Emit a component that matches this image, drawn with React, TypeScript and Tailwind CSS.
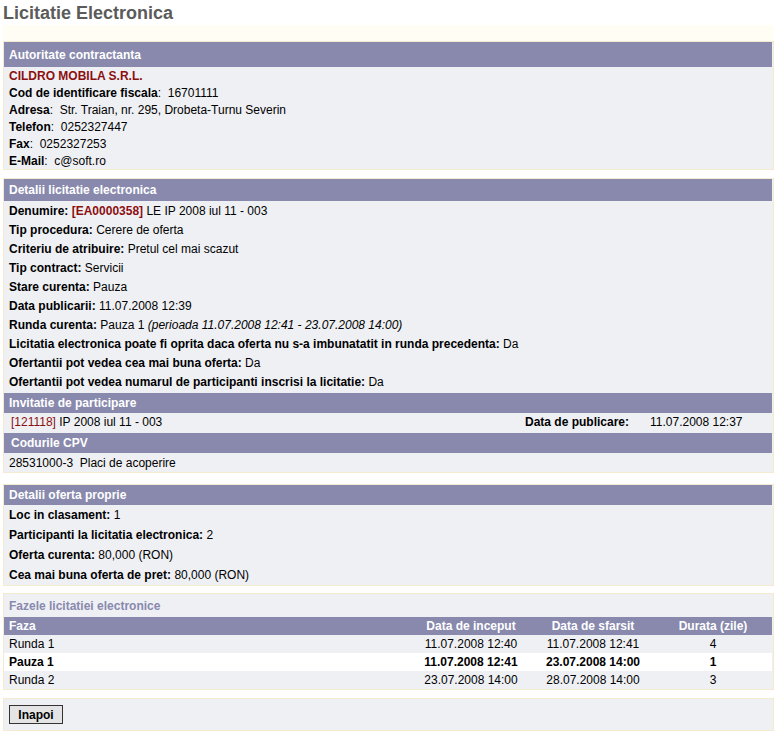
const F = "font-['Liberation_Sans',Arial,sans-serif]";

function Box({ children, className = "" }: { children: React.ReactNode; className?: string }) {
  return (
    <div className={`ml-[3px] w-[771px] border border-[#f3ead0] bg-[#eff0f4] ${className}`}>{children}</div>
  );
}

function Header({ children, h = "h-[20px]", pl = "pl-[5px]", className = "" }: { children: React.ReactNode; h?: string; pl?: string; className?: string }) {
  return (
    <div className={`mr-[1px] flex items-center bg-[#8889ad] font-bold text-white ${h} ${pl} ${className}`}>
      {children}
    </div>
  );
}

function Row({ label, children, h = "h-[19px]" }: { label: string; children?: React.ReactNode; h?: string }) {
  return (
    <div className={`flex items-center whitespace-pre pl-[5px] ${h}`}>
      <b>{label}</b>
      {children}
    </div>
  );
}

const phases = [
  { faza: "Runda 1", start: "11.07.2008 12:40", end: "11.07.2008 12:41", dur: "4", bold: false },
  { faza: "Pauza 1", start: "11.07.2008 12:41", end: "23.07.2008 14:00", dur: "1", bold: true },
  { faza: "Runda 2", start: "23.07.2008 14:00", end: "28.07.2008 14:00", dur: "3", bold: false },
];

export default function App() {
  return (
    <div className={`min-h-[734px] w-[779px] bg-white text-[12px] leading-none text-black ${F}`}>
      <h1 className="flex h-[25px] items-center pl-[3px] text-[18px] font-bold text-[#5b5b5b]">
        Licitatie Electronica
      </h1>

      <div className="ml-[3px] h-[16px] w-[771px] bg-[#fffdf4]" />

      {/* Autoritate contractanta */}
      <Box>
        <Header h="h-[25px]">Autoritate contractanta</Header>
        <div className="flex h-[17px] items-center pl-[5px] font-bold text-[#8b0f0f]">CILDRO MOBILA S.R.L.</div>
        <Row label="Cod de identificare fiscala" h="h-[17px]">:  16701111</Row>
        <Row label="Adresa" h="h-[17px]">:  Str. Traian, nr. 295, Drobeta-Turnu Severin</Row>
        <Row label="Telefon" h="h-[17px]">:  0252327447</Row>
        <Row label="Fax" h="h-[17px]">:  0252327253</Row>
        <Row label="E-Mail" h="h-[17px]">:  c@soft.ro</Row>
      </Box>

      <div className="h-[8px]" />

      {/* Detalii licitatie electronica */}
      <Box>
        <Header h="h-[22px]">Detalii licitatie electronica</Header>
        <Row label="Denumire: ">
          <b className="text-[#8b0f0f]">[EA0000358]</b> LE IP 2008 iul 11 - 003
        </Row>
        <Row label="Tip procedura: ">Cerere de oferta</Row>
        <Row label="Criteriu de atribuire: ">Pretul cel mai scazut</Row>
        <Row label="Tip contract: ">Servicii</Row>
        <Row label="Stare curenta: ">Pauza</Row>
        <Row label="Data publicarii: ">11.07.2008 12:39</Row>
        <Row label="Runda curenta: ">
          Pauza 1 <i>(perioada 11.07.2008 12:41 - 23.07.2008 14:00)</i>
        </Row>
        <Row label="Licitatia electronica poate fi oprita daca oferta nu s-a imbunatatit in runda precedenta: ">Da</Row>
        <Row label="Ofertantii pot vedea cea mai buna oferta: ">Da</Row>
        <Row label="Ofertantii pot vedea numarul de participanti inscrisi la licitatie: ">Da</Row>
        <Header h="h-[20px]" className="mt-[2px]">Invitatie de participare</Header>
        <div className="flex h-[20px] items-center whitespace-pre pb-[2px]">
          <span className="pl-[7px]">
            <span className="text-[#8b0f0f]">[121118]</span> IP 2008 iul 11 - 003
          </span>
          <span className="ml-auto w-[125px] font-bold">Data de publicare:</span>
          <span className="w-[123px]">11.07.2008 12:37</span>
        </div>
        <Header h="h-[20px]" pl="pl-[7px]">Codurile CPV</Header>
        <div className="flex h-[19px] items-center whitespace-pre pl-[5px]">28531000-3  Placi de acoperire</div>
      </Box>

      <div className="h-[11px]" />

      {/* Detalii oferta proprie */}
      <Box>
        <Header h="h-[20px]">Detalii oferta proprie</Header>
        <Row label="Loc in clasament: " h="h-[20px]">1</Row>
        <Row label="Participanti la licitatia electronica: " h="h-[20px]">2</Row>
        <Row label="Oferta curenta: " h="h-[20px]">80,000 (RON)</Row>
        <Row label="Cea mai buna oferta de pret: " h="h-[20px]">80,000 (RON)</Row>
      </Box>

      <div className="h-[7px]" />

      {/* Fazele licitatiei electronice */}
      <Box>
        <div className="flex h-[23px] items-center pl-[5px] font-bold text-[#8889ad]">Fazele licitatiei electronice</div>
        <div className="mr-[1px] grid h-[18px] grid-cols-[1fr_122px_122px_118px] items-center bg-[#8889ad] font-bold text-white">
          <span className="pl-[5px]">Faza</span>
          <span className="text-center">Data de inceput</span>
          <span className="text-center">Data de sfarsit</span>
          <span className="text-center">Durata (zile)</span>
        </div>
        {phases.map((p) => (
          <div
            key={p.faza}
            className={`mr-[1px] grid h-[18px] grid-cols-[1fr_122px_122px_118px] items-center ${p.bold ? "bg-white font-bold" : ""}`}
          >
            <span className="pl-[5px]">{p.faza}</span>
            <span className="text-center">{p.start}</span>
            <span className="text-center">{p.end}</span>
            <span className="text-center">{p.dur}</span>
          </div>
        ))}
      </Box>

      <div className="h-[8px]" />

      <Box className="flex h-[33px] items-center pl-[5px]">
        <button className="flex h-[19px] w-[54px] items-center justify-center border border-[#333] bg-[#e4e4e4] font-bold text-black">
          Inapoi
        </button>
      </Box>
    </div>
  );
}
